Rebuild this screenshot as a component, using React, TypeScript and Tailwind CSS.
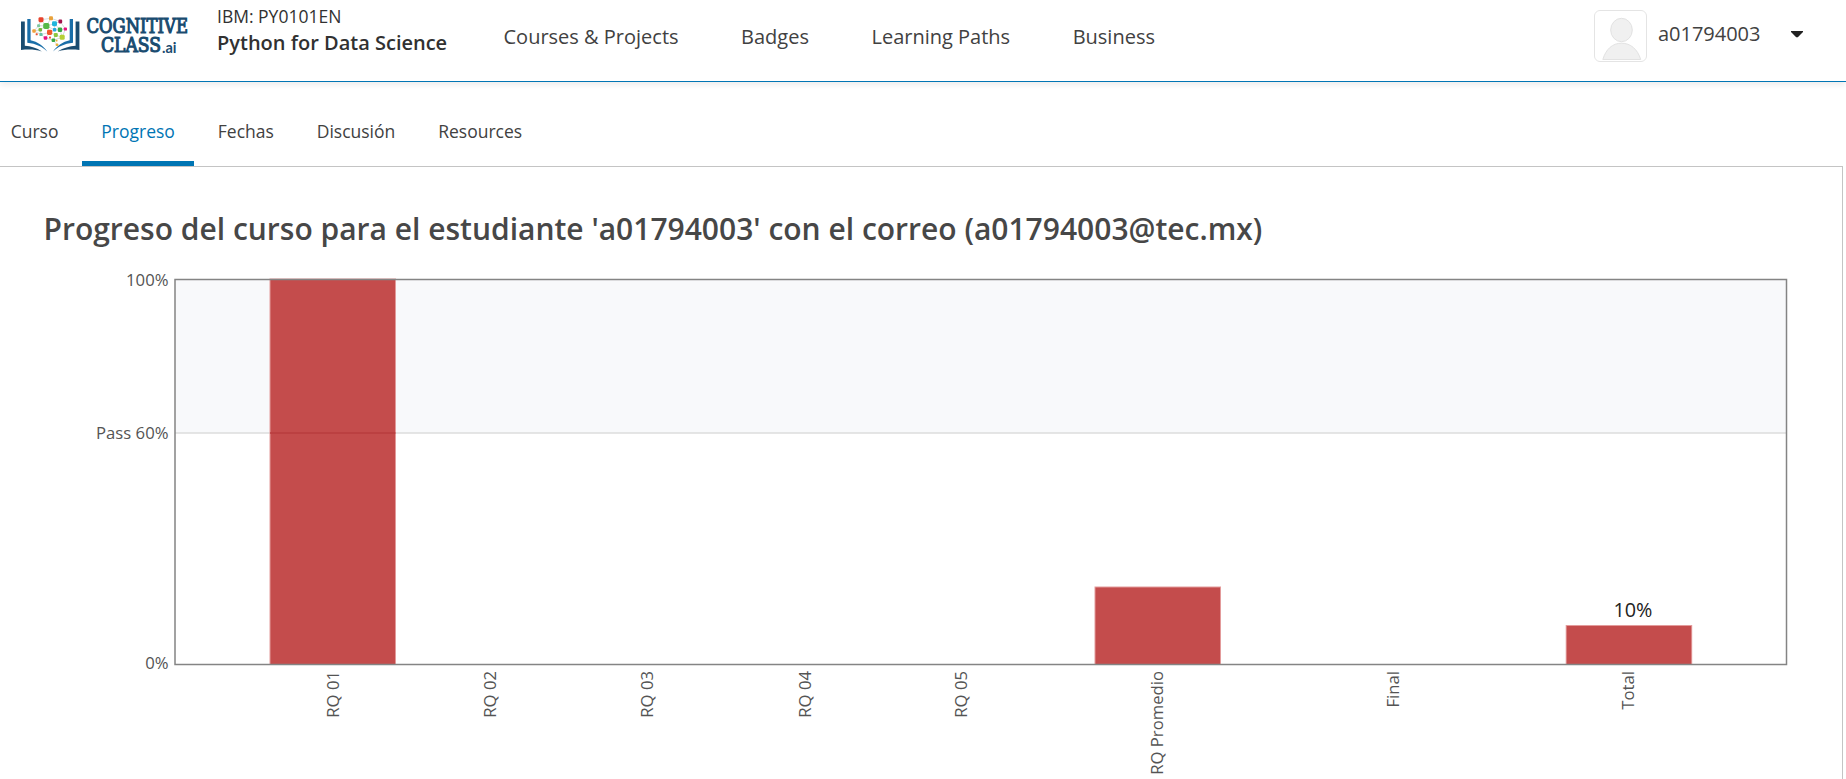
import React from "react";

const NAV_LINKS = ["Courses & Projects", "Badges", "Learning Paths", "Business"];

const TABS = ["Curso", "Progreso", "Fechas", "Discusión", "Resources"];

const PLOT = { left: 175, right: 1786.5, top: 279.5, bottom: 664.5 };

const COLUMNS = [
  { label: "RQ 01", baseline: 339, bar: 270, value: 100 },
  { label: "RQ 02", baseline: 496, bar: 427, value: 0 },
  { label: "RQ 03", baseline: 653, bar: 584, value: 0 },
  { label: "RQ 04", baseline: 811, bar: 742, value: 0 },
  { label: "RQ 05", baseline: 967, bar: 899, value: 0 },
  { label: "RQ Promedio", baseline: 1163, bar: 1095, value: 20 },
  { label: "Final", baseline: 1399, bar: 1331, value: 0 },
  { label: "Total", baseline: 1634, bar: 1566.2, value: 10 },
];

const DOTS: [number, number, number, string][] = [
  [41, 19.7, 5, "#e8432d"],
  [51, 18.3, 4, "#e9a23b"],
  [60.3, 21.5, 3.8, "#a3124b"],
  [46.3, 26, 6.2, "#55b948"],
  [54.5, 23.7, 5, "#1fb5dc"],
  [38.6, 25.7, 3, "#7cc7a0"],
  [34, 31, 3.4, "#f0a13c"],
  [40.3, 29.7, 3.6, "#7ab93c"],
  [36.7, 34.3, 2, "#e8502d"],
  [41, 34.5, 3.2, "#62c3a5"],
  [49.6, 32.4, 5.2, "#f0592a"],
  [54.6, 29.8, 3.4, "#25a9e0"],
  [60, 29.8, 4.4, "#3aa845"],
  [65.4, 29, 3.2, "#e6127d"],
  [55.8, 35, 4, "#8dc63f"],
  [62.2, 37.3, 5, "#b5cf35"],
  [45.5, 38, 3.6, "#e6127d"],
  [50, 37.6, 2, "#ef5a3c"],
  [53.4, 40.3, 3.6, "#3aa845"],
  [57, 44.7, 2.6, "#e9b23b"],
  [56.6, 40.6, 1.8, "#e9b23b"],
];

function Logo() {
  return (
    <svg className="overflow-visible" width="190" height="60" viewBox="0 0 190 60" role="img" aria-label="Cognitive Class">
      <path d="M21 21.5h3.8v24.3c6.2.5 12 2 17 5.8-6.400-2.300-13.400-2.300-20.800-1.600z" fill="#1a4c70" />
      <path d="M79.400 21.500h-3.800v24.300c-6.200.5-12 2-18 5.800 7-2.300 14.400-2.300 21.800-1.600z" fill="#1a4c70" />
      <path d="M27.300 19h3.300v21.200c7 1.500 12.500 5.200 16.600 11.300-5-4.700-11-7.800-19.900-8.700z" fill="#1a6ea8" />
      <path d="M73 19h-3.300v21.200c-7 1.500-12.500 5.200-16.600 11.300 5-4.700 11-7.800 19.900-8.700z" fill="#1a6ea8" />
      <path
        d="M41 19.700 51 18.300 60.300 21.500 65.400 29 62.200 37.300 53.400 40.300 45.500 38 41 34.500 34 31 38.600 25.700 41 19.700 46.300 26 54.500 23.700 60.300 21.500M46.300 26 51 18.300M40.300 29.700 46.300 26 49.600 32.400 54.600 29.800 60 29.800 65.400 29M38.600 25.700 46.300 26 54.600 29.800 54.500 23.700 60 29.800 62.200 37.300 55.800 35 49.600 32.400 41 34.500 40.300 29.700 34 31M49.600 32.400 45.500 38M55.800 35 53.400 40.300 57 44.700"
        fill="none"
        stroke="#b9c2c6"
        strokeWidth="0.6"
      />
      {DOTS.map(([x, y, size, color]) => (
        <rect key={`${x}-${y}`} x={x - size / 2} y={y - size / 2} width={size} height={size} rx={size * 0.28} fill={color} />
      ))}
      <g fill="#1a4c70" stroke="#1a4c70" strokeWidth="1.1" className="font-['DejaVu_Serif_Condensed','DejaVu_Serif',serif]">
        <text x="86.500" y="33.300" fontSize="20.200" textLength="101.500" lengthAdjust="spacingAndGlyphs">
          COGNITIVE
        </text>
        <text x="101" y="52.300" fontSize="20.200" textLength="60" lengthAdjust="spacingAndGlyphs">
          CLASS
        </text>
      </g>
      <text x="162" y="52.600" fontSize="15" fontWeight="700" fill="#1a4c70" textLength="14.500" lengthAdjust="spacingAndGlyphs" className="font-['Lato',sans-serif]">
        .ai
      </text>
    </svg>
  );
}

function Avatar() {
  return (
    <svg width="53" height="52" viewBox="0 0 53 52" aria-hidden="true">
      <rect x="0.500" y="0.500" width="52" height="51" rx="5.500" fill="#fff" stroke="#e4e4e4" />
      <g fill="#f0f0f0" stroke="#e2e2e2">
        <ellipse cx="27.500" cy="20" rx="10.800" ry="11.700" />
        <path d="M8.800 49.500C12 39 18.500 33.200 27.500 33.200S43.500 39 46.700 49.500z" />
      </g>
    </svg>
  );
}

function Header() {
  return (
    <header className="flex h-[82px] items-start border-b border-[#0075b4] bg-white shadow-[0_3px_6px_rgba(0,0,0,0.08)]">
      <Logo />
      <div className="ml-[27px] w-[286.500px] pt-[3px] text-[#313131]">
        <div className="text-[17.5px] leading-[26px]">IBM: PY0101EN</div>
        <div className="text-[20px] leading-[28px] font-semibold">Python for Data Science</div>
      </div>
      <nav className="flex gap-[62.500px] pt-[23px] text-[20px] leading-[28px] whitespace-nowrap text-[#414141]">
        {NAV_LINKS.map((link) => (
          <a key={link}>{link}</a>
        ))}
      </nav>
      <div className="mr-[43.500px] ml-auto flex items-start pt-[10px]">
        <Avatar />
        <span className="mt-[10px] ml-[11px] text-[20px] leading-[28px] text-[#414141]">a01794003</span>
        <svg className="mt-[21px] ml-[30px]" width="12" height="7" viewBox="0 0 12 7" aria-hidden="true">
          <path d="M0 0h12v1L6.800 6.200H5.200L0 1z" fill="#222" />
        </svg>
      </div>
    </header>
  );
}

function Tabs() {
  return (
    <nav className="ml-[-8.500px] flex h-[84px] gap-[4.500px] pt-[30px] text-[17.5px] leading-[26px]">
      {TABS.map((tab) => (
        <a
          key={tab}
          className={
            tab === "Progreso"
              ? "border-b-[5px] border-[#0075b4] px-[19.200px] pt-[6px] text-[#0075b4]"
              : "px-[19.200px] pt-[6px] text-[#414141]"
          }
        >
          {tab}
        </a>
      ))}
    </nav>
  );
}

function ProgressChart() {
  const { left, right, top, bottom } = PLOT;
  const height = bottom - top;
  const passY = 433;
  return (
    <svg className="block" width="1842" height="519" viewBox="0 260 1842 519" role="img" aria-label="Progreso">
      <rect x={left} y={top} width={right - left} height={passY - top} fill="#f8f9fb" />
      <line x1={left} x2={right} y1={passY} y2={passY} stroke="#dddddd" strokeWidth="1.500" />
      {COLUMNS.filter((c) => c.value > 0).map((c) => {
        const h = (height * c.value) / 100;
        return (
          <g key={c.label}>
            <rect x={c.bar - 0.5} y={bottom - h - 1} width="126.500" height={h + 1} fill="#e39b9b" />
            <rect x={c.bar + 0.5} y={bottom - h} width="124.500" height={h} fill="#c44c4c" />
          </g>
        );
      })}
      <line x1="270" x2="395.500" y1={passY} y2={passY} stroke="#b83c3e" strokeWidth="1.500" />
      <rect x={left} y={top} width={right - left} height={height} fill="none" stroke="#848484" strokeWidth="1.500" />
      <g fontSize="16.700" fill="#545454">
        <text x="168.500" y="285.700" textAnchor="end">100%</text>
        <text x="168.500" y="438.700" textAnchor="end">Pass 60%</text>
        <text x="168.500" y="668.700" textAnchor="end">0%</text>
        {COLUMNS.map((c) => (
          <text key={c.label} transform={`translate(${c.baseline} 671) rotate(-90)`} textAnchor="end">
            {c.label}
          </text>
        ))}
      </g>
      <text x="1633" y="616.700" fontSize="19.800" textAnchor="middle" fill="#222">
        10%
      </text>
    </svg>
  );
}

export default function App() {
  return (
    <div className="h-[779px] w-full overflow-hidden bg-white font-['Open_Sans','Noto_Sans',sans-serif]">
      <Header />
      <Tabs />
      <main className="h-[613px] w-[1843px] overflow-hidden border-t border-r border-[#c4c4c4]">
        <h1 className="mt-[42px] ml-[43.500px] h-[51px] text-[30px] leading-[40px] font-semibold whitespace-nowrap text-[#474747]">
          Progreso del curso para el estudiante 'a01794003' con el correo (a01794003@tec.mx)
        </h1>
        <ProgressChart />
      </main>
    </div>
  );
}
